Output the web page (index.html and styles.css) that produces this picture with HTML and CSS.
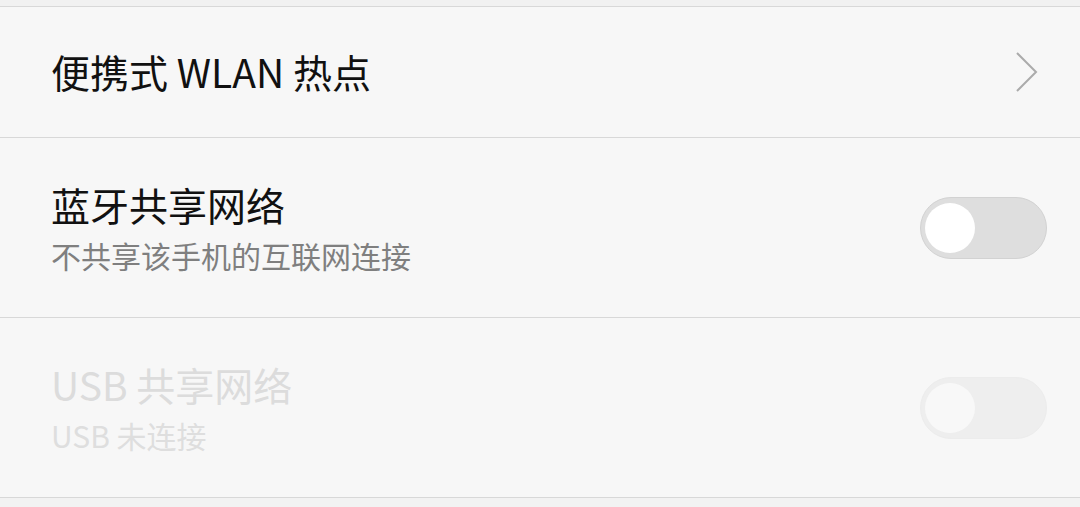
FILE: index.html
```html
<!DOCTYPE html>
<html lang="zh-CN">
<head>
<meta charset="utf-8">
<title>网络共享</title>
<link rel="stylesheet" href="styles.css">
</head>
<body>
<div class="top-gap"></div>
<ul class="list">
  <li class="item item-single">
    <div class="text">
      <div class="title">便携式 WLAN 热点</div>
    </div>
    <svg class="chevron" width="24" height="40" viewBox="0 0 24 40">
      <polyline points="2,1 21,20 2,39" fill="none" stroke="#ababab" stroke-width="2"/>
    </svg>
  </li>
  <li class="item">
    <div class="text">
      <div class="title">蓝牙共享网络</div>
      <div class="subtitle">不共享该手机的互联网连接</div>
    </div>
    <div class="switch"><span class="knob"></span></div>
  </li>
  <li class="item disabled">
    <div class="text">
      <div class="title">USB 共享网络</div>
      <div class="subtitle">USB 未连接</div>
    </div>
    <div class="switch"><span class="knob"></span></div>
  </li>
</ul>
</body>
</html>
```

FILE: styles.css
```css
html, body {
  margin: 0;
  padding: 0;
  background: #f2f2f2;
  font-family: "Noto Sans CJK SC", "Noto Sans", sans-serif;
  width: 1080px;
  height: 507px;
  overflow: hidden;
}

.top-gap {
  height: 6px;
  background: #f1f1f1;
}

.list {
  list-style: none;
  margin: 0;
  padding: 0;
  background: #f7f7f7;
  border-top: 1px solid #d8d8d8;
}

.item {
  display: flex;
  align-items: center;
  justify-content: space-between;
  height: 179px;
  padding: 0 33px 0 51px;
  border-bottom: 1px solid #d8d8d8;
}

.item-single {
  height: 130px;
  padding-right: 41px;
}

.text {
  display: flex;
  flex-direction: column;
  margin-top: 0;
}

.item-single .text {
  margin-top: -2px;
}

.title {
  font-size: 39px;
  line-height: 48px;
  color: #111;
}

.subtitle {
  font-size: 30px;
  line-height: 40px;
  margin-top: 7px;
  color: #7f7f7f;
}

.chevron {
  display: block;
}

.switch {
  box-sizing: border-box;
  width: 127px;
  height: 62px;
  border-radius: 31px;
  background: #dedede;
  border: 1px solid #d2d2d2;
  display: flex;
  align-items: center;
  padding-left: 4px;
}

.knob {
  width: 50px;
  height: 50px;
  border-radius: 50%;
  background: #fff;
}

.disabled .title { color: #dcdcdc; }
.disabled .subtitle { color: #dedede; }
.disabled .switch {
  background: #eeeeee;
  border-color: #ececec;
}
.disabled .knob { background: #f8f8f8; }
```
